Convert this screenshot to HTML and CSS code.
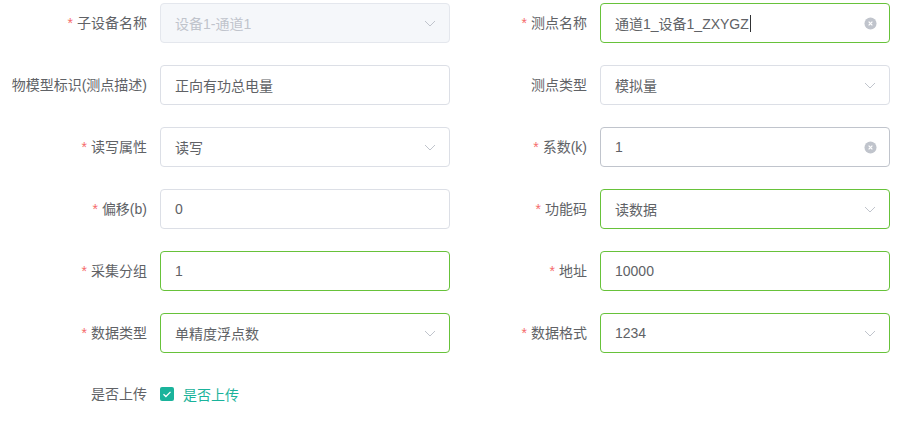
FILE: index.html
```html
<!DOCTYPE html>
<html lang="zh-CN">
<head>
    <meta charset="UTF-8">
    <title>测点编辑</title>
    <link rel="stylesheet" href="styles.css">
</head>
<body>
    <form class="point-form">
        <div class="form-grid">
            <div class="form-item left is-required">
                <label class="item-label">子设备名称</label>
                <div class="field is-disabled">
                    <span class="field-text">设备1-通道1</span>
                    <svg class="arrow" viewBox="0 0 12 7"><path d="M1 1l5 5 5-5" /></svg>
                </div>
            </div>
            <div class="form-item right is-required">
                <label class="item-label">测点名称</label>
                <div class="field is-success">
                    <span class="field-text">通道1_设备1_ZXYGZ<i class="caret"></i></span>
                    <span class="clear">
                        <svg viewBox="0 0 14 14"><circle cx="7" cy="7" r="6.5" /><path d="M5 5l4 4M9 5l-4 4" /></svg>
                    </span>
                </div>
            </div>

            <div class="form-item left">
                <label class="item-label">物模型标识(测点描述)</label>
                <div class="field">
                    <span class="field-text">正向有功总电量</span>
                </div>
            </div>
            <div class="form-item right">
                <label class="item-label">测点类型</label>
                <div class="field">
                    <span class="field-text">模拟量</span>
                    <svg class="arrow" viewBox="0 0 12 7"><path d="M1 1l5 5 5-5" /></svg>
                </div>
            </div>

            <div class="form-item left is-required">
                <label class="item-label">读写属性</label>
                <div class="field">
                    <span class="field-text">读写</span>
                    <svg class="arrow" viewBox="0 0 12 7"><path d="M1 1l5 5 5-5" /></svg>
                </div>
            </div>
            <div class="form-item right is-required">
                <label class="item-label">系数(k)</label>
                <div class="field is-hover">
                    <span class="field-text">1</span>
                    <span class="clear">
                        <svg viewBox="0 0 14 14"><circle cx="7" cy="7" r="6.5" /><path d="M5 5l4 4M9 5l-4 4" /></svg>
                    </span>
                </div>
            </div>

            <div class="form-item left is-required">
                <label class="item-label">偏移(b)</label>
                <div class="field">
                    <span class="field-text">0</span>
                </div>
            </div>
            <div class="form-item right is-required">
                <label class="item-label">功能码</label>
                <div class="field is-success">
                    <span class="field-text">读数据</span>
                    <svg class="arrow" viewBox="0 0 12 7"><path d="M1 1l5 5 5-5" /></svg>
                </div>
            </div>

            <div class="form-item left is-required">
                <label class="item-label">采集分组</label>
                <div class="field is-success">
                    <span class="field-text">1</span>
                </div>
            </div>
            <div class="form-item right is-required">
                <label class="item-label">地址</label>
                <div class="field is-success">
                    <span class="field-text">10000</span>
                </div>
            </div>

            <div class="form-item left is-required">
                <label class="item-label">数据类型</label>
                <div class="field is-success">
                    <span class="field-text">单精度浮点数</span>
                    <svg class="arrow" viewBox="0 0 12 7"><path d="M1 1l5 5 5-5" /></svg>
                </div>
            </div>
            <div class="form-item right is-required">
                <label class="item-label">数据格式</label>
                <div class="field is-success">
                    <span class="field-text">1234</span>
                    <svg class="arrow" viewBox="0 0 12 7"><path d="M1 1l5 5 5-5" /></svg>
                </div>
            </div>
        </div>

        <div class="form-item left upload-item">
            <label class="item-label">是否上传</label>
            <label class="checkbox">
                <span class="check-box">
                    <svg viewBox="0 0 14 14"><path d="M3.5 7.2l2.4 2.3 4.6-4.6" /></svg>
                </span>
                <span class="check-text">是否上传</span>
            </label>
        </div>
    </form>
</body>
</html>
```

FILE: styles.css
```css
*{
    margin: 0;
    padding: 0;
    box-sizing: border-box;
}
body{
    background: #fff;
    font-family: "Helvetica Neue", "Liberation Sans", "Noto Sans CJK SC", sans-serif;
    font-size: 14px;
    color: #606266;
}
.point-form{
    width: 919px;
    padding-top: 3px;
}
.form-grid{
    display: grid;
    grid-template-columns: 450px 440px;
    row-gap: 22px;
}
.form-item{
    display: flex;
    align-items: center;
    height: 40px;
}
.item-label{
    flex-shrink: 0;
    width: 160px;
    padding-right: 13px;
    text-align: right;
    color: #606266;
    line-height: 40px;
    white-space: nowrap;
}
.form-item.right .item-label{
    width: 150px;
}
.is-required .item-label::before{
    content: "*";
    color: #f56c6c;
    margin-right: 4px;
}
.field{
    position: relative;
    display: flex;
    align-items: center;
    width: 290px;
    height: 40px;
    padding: 0 15px 0 14px;
    border: 1px solid #dcdfe6;
    border-radius: 4px;
    background: #fff;
}
.field-text{
    flex: 1;
    display: flex;
    align-items: center;
    color: #606266;
    white-space: nowrap;
}
.field.is-disabled{
    background: #f5f7fa;
    border-color: #e4e7ed;
}
.field.is-disabled .field-text{
    color: #c0c4cc;
}
.field.is-success{
    border-color: #67c23a;
}
.field.is-hover{
    border-color: #c0c4cc;
}
.caret{
    display: inline-block;
    width: 1px;
    height: 17px;
    margin-left: 1px;
    background: #303133;
}
.arrow{
    width: 12px;
    height: 7px;
    margin-right: -2px;
    fill: none;
    stroke: #c0c4cc;
    stroke-width: 1;
}
.clear{
    display: flex;
    margin-right: -3px;
}
.clear svg{
    width: 13px;
    height: 13px;
}
.clear circle{
    fill: #c0c4cc;
}
.clear path{
    fill: none;
    stroke: #fff;
    stroke-width: 1.3;
}
.upload-item{
    margin-top: 21px;
}
.checkbox{
    display: flex;
    align-items: center;
    cursor: pointer;
}
.check-box{
    display: flex;
    width: 14px;
    height: 14px;
    border-radius: 2px;
    background: #1ab39b;
}
.check-box svg{
    width: 14px;
    height: 14px;
    fill: none;
    stroke: #fff;
    stroke-width: 1.3;
}
.check-text{
    margin-left: 9px;
    color: #1ab39b;
}
```
